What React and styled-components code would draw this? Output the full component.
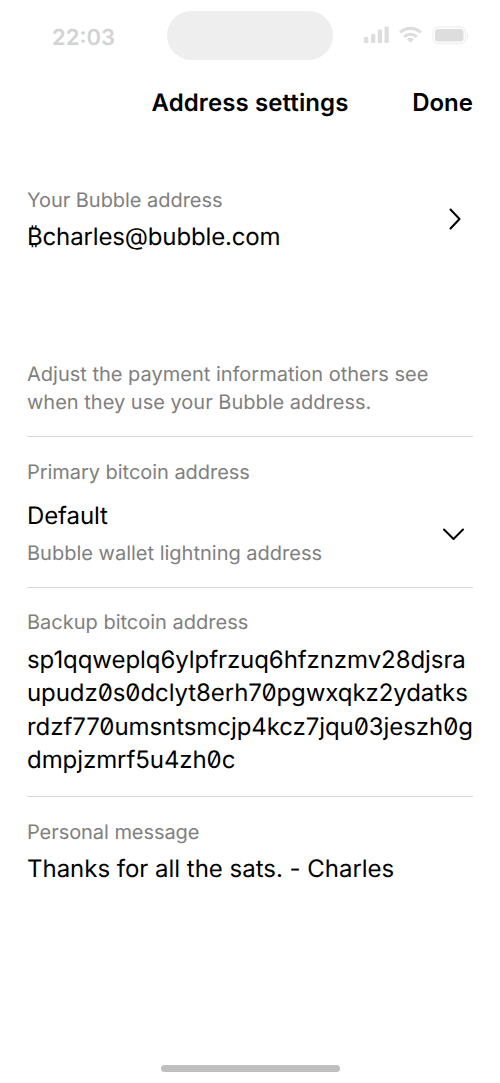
import React from "react";
import styled, { createGlobalStyle } from "styled-components";

const Global = createGlobalStyle`
  * { box-sizing: border-box; }
  body { margin: 0; background: #fff; font-family: Inter, sans-serif; font-weight: 400; color: #000; text-rendering: geometricPrecision; }
`;
const Screen = styled.main`
  width: 500px; height: 1083px; display: flex; flex-direction: column; overflow: hidden; background: #fff;
`;
const StatusBar = styled.header`
  height: 74px; display: grid; grid-template-columns: 167px 166px 1fr; padding-top: 11px; flex: none;
`;
const Clock = styled.div`
  font-size: 22px; line-height: 28px; font-weight: 600; color: #d3d3d3; padding: 13px 0 0 52px;
`;
const Island = styled.div`
  height: 49px; border-radius: 25px; background: #eee;
`;
const Indicators = styled.div`
  padding: 14px 0 0 31px;
`;
const NavBar = styled.nav`
  height: 56px; display: grid; grid-template-columns: 1fr 197px 1fr; align-items: center; padding: 0 27px;
  font-size: 24px; font-weight: 600; line-height: 33px; white-space: nowrap; flex: none;
`;
const Title = styled.h1`
  margin: 0; font: inherit; grid-column: 2; letter-spacing: 0.1px;
`;
const Done = styled.button`
  border: 0; padding: 0; background: none; font: inherit; color: inherit; justify-self: end;
`;
const Body = styled.div`
  padding: 0 27px; display: flex; flex-direction: column;
`;
const Section = styled.section`
  height: ${(p) => p.$height}px; padding-top: ${(p) => p.$top}px;
  border-top: ${(p) => (p.$rule ? "1px solid #d9d9d9" : "0")};
  display: flex; justify-content: space-between;
`;
const Muted = styled.div`
  font-size: 20px; line-height: 28px; color: #808080; white-space: nowrap;
  margin-top: ${(p) => p.$gap || 0}px; letter-spacing: ${(p) => p.$spacing || 0}px;
`;
const Value = styled.div`
  font-size: 24px; line-height: 33.4px; white-space: nowrap;
  margin-top: ${(p) => p.$gap || 0}px; letter-spacing: ${(p) => p.$spacing || 0}px;
`;
const Address = styled(Value)`
  font-feature-settings: "zero" 1;
`;
const Chevron = styled.svg`
  flex: none; margin: ${(p) => p.$offset};
  fill: none; stroke: #000; stroke-width: 2; stroke-linecap: round; stroke-linejoin: round;
`;
const Footer = styled.footer`
  margin-top: auto; height: 18px; display: flex; justify-content: center; flex: none;
`;
const HomeBar = styled.div`
  width: 179px; height: 7px; border-radius: 4px; background: #bfbfbf;
`;
const backup = ["sp1qqweplq6ylpfrzuq6hfznzmv28djsra", "upudz0s0dclyt8erh70pgwxqkz2ydatks", "rdzf770umsntsmcjp4kcz7jqu03jeszh0g", "dmpjzmrf5u4zh0c"];

export default function App() {
  return (
    <Screen>
      <Global />
      <StatusBar>
        <Clock>22:03</Clock>
        <Island />
        <Indicators>
          <svg width="106" height="22" viewBox="364 25 106 22" fill="#ddd">
            <rect x="364" y="37" width="4.300" height="6" rx="1.200" /><rect x="371" y="34" width="4.300" height="9" rx="1.200" />
            <rect x="377.700" y="29.500" width="4.300" height="13.500" rx="1.200" /><rect x="384.500" y="26.500" width="4.300" height="16.500" rx="1.200" />
            <g fill="none" stroke="#ddd" strokeWidth="3.200"><path d="M400.200 32.400A15 15 0 0 1 420.800 32.400" /><path d="M404.200 36.800A9 9 0 0 1 416.800 36.800" /></g>
            <path d="M407 39.200q3.500-2.900 7 0l-3.500 3.600z" />
            <rect x="433" y="27" width="32.500" height="16.500" rx="5" fill="none" stroke="#f1f1f1" strokeWidth="1.300" /><rect x="435" y="29" width="28.500" height="12.500" rx="3" />
            <path d="M467 33q3 2.500 0 5.500z" fill="#eee" />
          </svg>
        </Indicators>
      </StatusBar>
      <NavBar><Title>Address settings</Title><Done>Done</Done></NavBar>
      <Body>
        <Section $height={230} $top={56}>
          <div><Muted $spacing={-0.04}>Your Bubble address</Muted><Value $gap={6} $spacing={-0.15}>₿charles@bubble.com</Value></div>
          <Chevron $offset="21px 11px 0 0" width="14" height="24"><path d="M2.500 2.500l9 9.500-9 9.500" /></Chevron>
        </Section>
        <Section $height={76} $top={0}>
          <Muted>Adjust the payment information others see<br />when they use your Bubble address.</Muted>
        </Section>
        <Section $rule $height={151} $top={21}>
          <div>
            <Muted $spacing={-0.04}>Primary bitcoin address</Muted>
            <Value $gap={13} $spacing={-0.1}>Default</Value>
            <Muted $gap={7}>Bubble wallet lightning address</Muted>
          </div>
          <Chevron $offset="69px 8px 0 0" width="24" height="15"><path d="M3 2.500l9.500 9.500 9.500-9.500" /></Chevron>
        </Section>
        <Section $rule $height={209} $top={20}>
          <div><Muted>Backup bitcoin address</Muted><Address $gap={7} $spacing={-0.07}>{backup.map((l) => <div key={l}>{l}</div>)}</Address></div>
        </Section>
        <Section $rule $height={120} $top={21}>
          <div><Muted $spacing={-0.06}>Personal message</Muted><Value $gap={6} $spacing={-0.02}>Thanks for all the sats. - Charles</Value></div>
        </Section>
      </Body>
      <Footer><HomeBar /></Footer>
    </Screen>
  );
}
